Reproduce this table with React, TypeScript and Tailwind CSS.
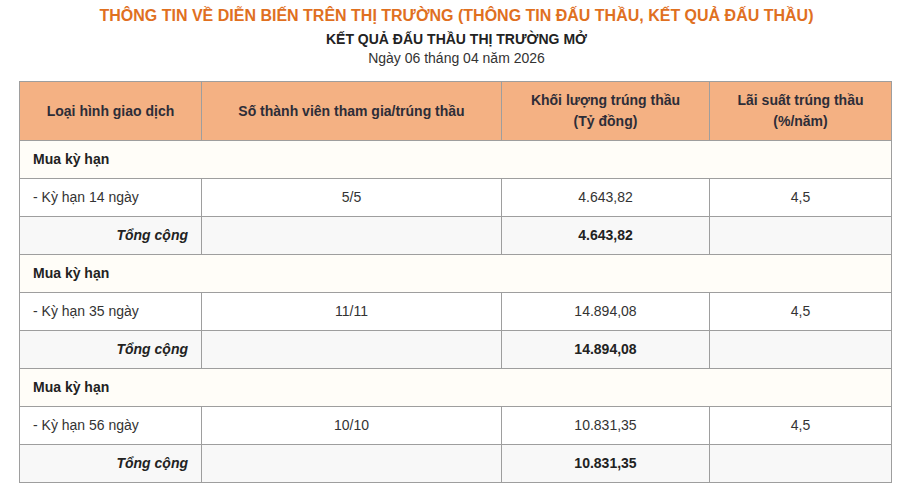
export default function App() {
  const groups = [
    { term: "- Kỳ hạn 14 ngày", members: "5/5", volume: "4.643,82", rate: "4,5" },
    { term: "- Kỳ hạn 35 ngày", members: "11/11", volume: "14.894,08", rate: "4,5" },
    { term: "- Kỳ hạn 56 ngày", members: "10/10", volume: "10.831,35", rate: "4,5" },
  ];

  return (
    <div className="w-[913px] h-[494px] bg-white text-[#333] font-['Liberation_Sans',Arial,sans-serif]">
      {/* tiêu đề */}
      <div className="pt-[5px] text-center">
        <h1 className="text-[16px] leading-[22px] font-bold text-[#e0701f]">
          THÔNG TIN VỀ DIỄN BIẾN TRÊN THỊ TRƯỜNG (THÔNG TIN ĐẤU THẦU, KẾT QUẢ ĐẤU THẦU)
        </h1>
        <p className="mt-[4px] text-[14px] leading-[16px] font-bold text-[#222]">KẾT QUẢ ĐẤU THẦU THỊ TRƯỜNG MỞ</p>
        <p className="mt-[2px] text-[14px] leading-[18px] text-[#333]">Ngày 06 tháng 04 năm 2026</p>
      </div>

      {/* bảng kết quả */}
      <table className="mt-[14px] ml-[19px] w-[872px] border-collapse table-fixed text-[14px] text-[#333]">
        <colgroup>
          <col className="w-[182px]" />
          <col className="w-[300px]" />
          <col className="w-[208px]" />
          <col className="w-[182px]" />
        </colgroup>
        <thead>
          <tr className="h-[59px] bg-[#f4b183] text-[#2d2d38]">
            <th className="border border-[#9e9e9e] font-bold leading-[21px]">Loại hình giao dịch</th>
            <th className="border border-[#9e9e9e] font-bold leading-[21px]">Số thành viên tham gia/trúng thầu</th>
            <th className="border border-[#9e9e9e] font-bold leading-[21px]">
              Khối lượng trúng thầu
              <br />
              (Tỷ đồng)
            </th>
            <th className="border border-[#9e9e9e] font-bold leading-[21px]">
              Lãi suất trúng thầu
              <br />
              (%/năm)
            </th>
          </tr>
        </thead>
        <tbody>
          {groups.map((g) => (
            <>
              <tr key={g.term + "h"} className="h-[38px] bg-[#fffdf8]">
                <td colSpan={4} className="border border-[#9e9e9e] px-[13px] font-bold text-[#222]">
                  Mua kỳ hạn
                </td>
              </tr>
              <tr key={g.term} className="h-[38px] bg-white">
                <td className="border border-[#9e9e9e] px-[13px]">{g.term}</td>
                <td className="border border-[#9e9e9e] text-center">{g.members}</td>
                <td className="border border-[#9e9e9e] text-center">{g.volume}</td>
                <td className="border border-[#9e9e9e] text-center">{g.rate}</td>
              </tr>
              <tr key={g.term + "t"} className="h-[38px] bg-[#f8f8f8]">
                <td className="border border-[#9e9e9e] px-[13px] text-right font-bold italic text-[#222]">Tổng cộng</td>
                <td className="border border-[#9e9e9e]"></td>
                <td className="border border-[#9e9e9e] text-center font-bold text-[#222]">{g.volume}</td>
                <td className="border border-[#9e9e9e]"></td>
              </tr>
            </>
          ))}
        </tbody>
      </table>
    </div>
  );
}
